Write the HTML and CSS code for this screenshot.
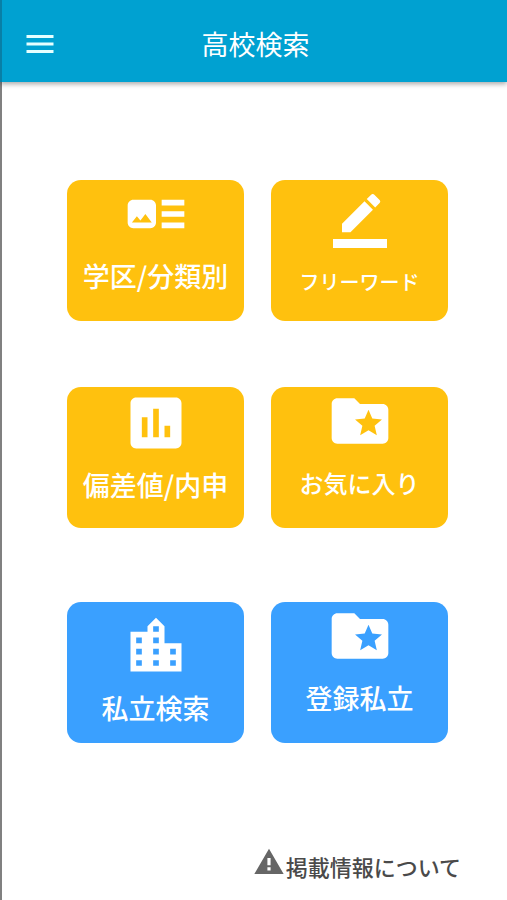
FILE: index.html
```html
<!DOCTYPE html>
<html lang="ja">
<head>
  <meta charset="UTF-8">
  <meta name="viewport" content="width=device-width, initial-scale=1">
  <title>高校検索</title>
  <link rel="stylesheet" href="styles.css">
</head>
<body>
  <header class="app-bar">
    <button class="menu-btn" type="button" aria-label="メニュー">
      <svg viewBox="0 0 24 24"><path d="M3 18h18v-2H3v2zm0-5h18v-2H3v2zm0-7v2h18V6H3z"/></svg>
    </button>
    <h1 class="title">高校検索</h1>
  </header>

  <main class="content">
    <!-- 公立 -->
    <div class="card-grid">
      <button class="card" type="button">
        <svg class="icon" viewBox="0 0 24 24"><path d="M22 13h-8v-2h8v2zm0-6h-8v2h8V7zm-8 10h8v-2h-8v2zm-2-8v6c0 1.1-.9 2-2 2H4c-1.1 0-2-.9-2-2V9c0-1.1.9-2 2-2h6c1.1 0 2 .9 2 2zm-1.5 6l-2.25-3-1.75 2.26-1.25-1.51L3.5 15h7z"/></svg>
        <span class="label">学区/分類別</span>
      </button>
      <button class="card card-edit" type="button">
        <svg class="icon" viewBox="0 0 24 24"><path d="M17.75 7L14 3.25l-10 10V17h3.75l10-10zm2.96-2.96c.39-.39.39-1.02 0-1.41L18.37.29c-.39-.39-1.02-.39-1.41 0L15 2.25 18.75 6l1.96-1.96zM0 20h24v4H0z"/></svg>
        <span class="label">フリーワード</span>
      </button>
      <button class="card card-chart" type="button">
        <svg class="icon" viewBox="0 0 24 24"><path d="M19 3H5c-1.1 0-2 .9-2 2v14c0 1.1.9 2 2 2h14c1.1 0 2-.9 2-2V5c0-1.1-.9-2-2-2zM9 17H7v-7h2v7zm4 0h-2V7h2v10zm4 0h-2v-4h2v4z"/></svg>
        <span class="label">偏差値/内申</span>
      </button>
      <button class="card card-favorite" type="button">
        <svg class="icon" viewBox="0 0 24 24"><path d="M20 6h-8l-2-2H4c-1.1 0-1.99.9-1.99 2L2 18c0 1.1.9 2 2 2h16c1.1 0 2-.9 2-2V8c0-1.1-.9-2-2-2zm-2.06 11L15 15.28 12.06 17l.78-3.33-2.59-2.24 3.41-.29L15 8l1.34 3.14 3.41.29-2.59 2.24.78 3.33z"/></svg>
        <span class="label">お気に入り</span>
      </button>
    </div>

    <!-- 私立 -->
    <div class="card-grid private">
      <button class="card card-city" type="button">
        <svg class="icon" viewBox="0 0 24 24"><path d="M15 11V5l-3-3-3 3v2H3v14h18V11h-6zm-8 8H5v-2h2v2zm0-4H5v-2h2v2zm0-4H5V9h2v2zm6 8h-2v-2h2v2zm0-4h-2v-2h2v2zm0-4h-2V9h2v2zm0-4h-2V5h2v2zm6 12h-2v-2h2v2zm0-4h-2v-2h2v2z"/></svg>
        <span class="label">私立検索</span>
      </button>
      <button class="card" type="button">
        <svg class="icon" viewBox="0 0 24 24"><path d="M20 6h-8l-2-2H4c-1.1 0-1.99.9-1.99 2L2 18c0 1.1.9 2 2 2h16c1.1 0 2-.9 2-2V8c0-1.1-.9-2-2-2zm-2.06 11L15 15.28 12.06 17l.78-3.33-2.59-2.24 3.41-.29L15 8l1.34 3.14 3.41.29-2.59 2.24.78 3.33z"/></svg>
        <span class="label">登録私立</span>
      </button>
    </div>

    <a class="about-link" href="#about">
      <svg viewBox="0 0 24 24"><path d="M1 21h22L12 2 1 21zm12.2-2.6h-2.4v-2.4h2.4v2.4zm0-4h-2.4V9h2.4v5.400z"/></svg>
      <span>掲載情報について</span>
    </a>
  </main>
</body>
</html>
```
FILE: styles.css
```css
* {
  box-sizing: border-box;
}
body {
  margin: 0;
  min-height: 100vh;
  display: flex;
  flex-direction: column;
  background: #fff;
  font-family: "Noto Sans CJK JP", sans-serif;
}
svg {
  display: block;
  fill: currentColor;
}
button {
  font-family: inherit;
  border: none;
  cursor: pointer;
}

.app-bar {
  display: grid;
  grid-template-columns: 36px 1fr 36px;
  align-items: center;
  height: 82px;
  padding: 6px 18px 0 20px;
  background: #00a1d1;
  border-left: 2px solid #087fa6;
  color: #fff;
  box-shadow: 0 2px 5px rgba(0,0,0,0.35);
  z-index: 1;
}
.menu-btn {
  padding: 0;
  background: none;
  color: #e6ffff;
}
.title {
  margin: 0;
  text-align: center;
  font-size: 27px;
  line-height: 40px;
  font-weight: 400;
}

.content {
  flex: 1;
  display: flex;
  flex-direction: column;
  padding: 98px 59px 14px 65px;
  border-left: 2px solid #808080;
}
.card-grid {
  display: grid;
  grid-template-columns: 1fr 1fr;
  gap: 66px 27px;
}
.card {
  display: flex;
  flex-direction: column;
  align-items: center;
  justify-content: flex-start;
  gap: 8px;
  height: 141px;
  padding: 0;
  border-radius: 14px;
  background: #ffc10e;
  color: #fff;
}
.icon {
  width: 68px;
  height: 68px;
  flex: none;
}
.label {
  font-size: 27px;
  line-height: 40px;
  font-weight: 500;
  white-space: nowrap;
}
.card-edit {
  padding-top: 14px;
  gap: 14px;
}
.card-edit .icon {
  width: 54px;
  height: 54px;
}
.card-edit .label {
  font-size: 20px;
}
.card-chart {
  padding-top: 2px;
}
.card-favorite .label {
  font-size: 24px;
}
.card-city {
  padding-top: 10px;
}

.private {
  margin-top: 74px;
}
.private .card {
  background: #3aa0ff;
}

.about-link {
  display: flex;
  align-items: center;
  align-self: flex-end;
  gap: 1px;
  margin-top: auto;
  margin-right: -13px;
  color: #4a4a4a;
  font-size: 22px;
  line-height: 38px;
  font-weight: 500;
  text-decoration: none;
}
.about-link svg {
  width: 32px;
  height: 32px;
  margin-bottom: 8px;
  color: #666;
}
```
